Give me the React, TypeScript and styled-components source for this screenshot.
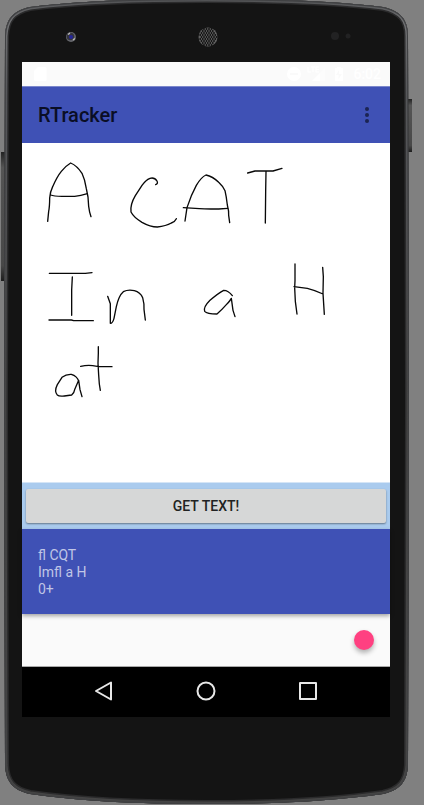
import React from "react";
import styled, { createGlobalStyle } from "styled-components";

const GlobalStyle = createGlobalStyle`
  *, *::before, *::after { box-sizing: border-box; }
  body {
    margin: 0;
    background: #808080;
    font-family: Roboto, "Noto Sans", sans-serif;
  }
  button { font: inherit; color: inherit; border: 0; padding: 0; background: none; cursor: pointer; }
`;

const Device = styled.div`
  position: relative;
  isolation: isolate;
  display: flex;
  flex-direction: column;
  min-height: 100vh;
  padding: 0 34px 0 22px;
`;

const DeviceBody = styled.svg`
  position: absolute;
  inset: 0;
  width: 100%;
  height: 100%;
  z-index: -1;
`;

const Bezel = styled.div<{ $height: number }>`
  flex: none;
  height: ${(p) => p.$height}px;
`;

const SensorRow = styled(Bezel)`
  display: grid;
  grid-template-columns: 1fr auto 1fr;
  align-items: center;
  padding: 12px 38px 0 42px;
`;

const Sensor = styled.svg<{ $end?: boolean }>`
  display: block;
  justify-self: ${(p) => (p.$end ? "end" : "start")};
`;

const Screen = styled.main`
  flex: 1;
  display: flex;
  flex-direction: column;
  background: #fafafa;
`;

const StatusBar = styled.div`
  display: flex;
  align-items: center;
  justify-content: space-between;
  height: 24px;
  padding: 0 9px 0 11px;
  color: #fff;
`;

const StatusGroup = styled.div`
  display: flex;
  align-items: center;
  gap: 4px;
`;

const Clock = styled.time`
  font-size: 14px;
  font-weight: 500;
  line-height: 24px;
`;

const Toolbar = styled.header`
  display: flex;
  align-items: center;
  justify-content: space-between;
  height: 57px;
  padding: 0 11px 0 16px;
  background: #3f51b5;
  border-top: 1px solid #7b87cb;
`;

const Title = styled.h1`
  margin: 0;
  font-size: 20px;
  font-weight: 500;
  line-height: 24px;
  color: #0a0e25;
`;

const MenuButton = styled.button`
  display: grid;
  place-items: center;
  width: 24px;
  height: 40px;
  color: #1c2452;
`;

const WritingPad = styled.section`
  flex: 1;
  min-height: 339px;
  background: #fff;
`;

const Ink = styled.svg`
  display: block;
  width: 100%;
  height: 339px;
  fill: none;
  stroke: #080808;
  stroke-width: 4;
  stroke-linecap: round;
  stroke-linejoin: round;
`;

const ActionBar = styled.div`
  display: flex;
  height: 47px;
  padding: 6px 4px;
  background: #aacbee;
  border-top: 1px solid #d5e5f6;
`;

const TextButton = styled.button`
  flex: 1;
  height: 34px;
  border-radius: 2px;
  background: #d6d7d7;
  box-shadow: 0 1px 2px rgba(0, 0, 0, 0.42);
  color: #212222;
  font-size: 14px;
  font-weight: 500;
  line-height: 34px;
`;

const Result = styled.output`
  display: block;
  height: 85px;
  padding: 18px 16px;
  background: #3f51b5;
  box-shadow: 0 2px 4px rgba(0, 0, 0, 0.35);
  color: #c0c6e6;
  font-size: 14px;
  line-height: 17px;
  white-space: pre-line;
`;

const Footer = styled.div`
  display: flex;
  align-items: center;
  justify-content: flex-end;
  height: 53px;
  padding: 0 16px;
  border-bottom: 1px solid #a8a8a8;
`;

const FloatingButton = styled.button`
  width: 20px;
  height: 20px;
  border-radius: 50%;
  background: #ff4081;
  box-shadow: 0 3px 5px rgba(0, 0, 0, 0.3);
`;

const NavBar = styled.nav`
  display: flex;
  justify-content: center;
  align-items: flex-start;
  gap: 54px;
  height: 50px;
  background: #000;
`;

const NavButton = styled.button`
  display: grid;
  place-items: center;
  width: 48px;
  height: 48px;
`;

const NavIcon = styled.svg`
  width: 24px;
  height: 24px;
  fill: none;
  stroke: #e8e8e8;
  stroke-width: 2;
  stroke-linejoin: round;
`;

const SHELL =
  "M4 400 L5 36 C6 20 12 11 30 7 C70 2 120 -1 207 -1 C293 -1 343 2 383 7 C401 11 408 20 408 36 L409 400 L408 765 C407 782 400 790 383 794 C333 801 280 804 207 804 C134 804 80 801 30 794 C13 790 6 782 5 765 Z";

const SPEAKER_ROWS = [2, 4, 6, 8, 10, 12, 14, 16, 18];

function Shell() {
  return (
    <DeviceBody viewBox="0 0 424 805" preserveAspectRatio="none" aria-hidden="true">
      <defs>
        <linearGradient id="key" x1="0" x2="0" y1="0" y2="1">
          <stop offset="0" stopColor="#222" />
          <stop offset=".12" stopColor="#555" />
          <stop offset=".88" stopColor="#484848" />
          <stop offset="1" stopColor="#1c1c1c" />
        </linearGradient>
        <linearGradient id="rim" x1="0" x2="0" y1="0" y2="1">
          <stop offset="0" stopColor="#505153" />
          <stop offset=".03" stopColor="#707173" />
          <stop offset=".12" stopColor="#56575a" />
          <stop offset=".5" stopColor="#444" />
          <stop offset="1" stopColor="#444" />
        </linearGradient>
      </defs>
      <rect x="1" y="152" width="5" height="129" fill="url(#key)" />
      <rect x="407" y="99" width="5" height="53" fill="url(#key)" />
      <path d={SHELL} fill="#141414" />
      <clipPath id="shell"><path d={SHELL} /></clipPath>
      <g clipPath="url(#shell)" fill="none">
        <path d={SHELL} stroke="#2b2b2c" strokeWidth="8" />
        <path d={SHELL} stroke="url(#rim)" strokeWidth="5" />
        <path d={SHELL} stroke="#404143" strokeWidth="2" />
      </g>
    </DeviceBody>
  );
}

function Sensors() {
  return (
    <SensorRow $height={62}>
      <Sensor width="14" height="14" viewBox="0 0 14 14" aria-hidden="true">
        <circle cx="7" cy="7" r="5" fill="#65666b" />
        <circle cx="6.5" cy="6.5" r="3.8" fill="#34343c" />
        <circle cx="7" cy="7" r="2" fill="#24269a" />
        <path d="M4 4.5l2-1.3M9 10l1.8-1.5" stroke="#bbb" strokeWidth="1.4" />
      </Sensor>
      <Sensor width="20" height="20" viewBox="0 0 20 20" aria-hidden="true">
        <circle cx="10" cy="10" r="9.5" fill="#626262" />
        <g fill="#101010">
          {SPEAKER_ROWS.flatMap((y, row) =>
            [1, 3.5, 6, 8.5, 11, 13.5, 16, 18.5].map((x) => {
              const cx = x + (row % 2) * 1.25;
              return Math.hypot(cx - 10, y - 10) < 9 ? (
                <circle key={`${x}-${y}`} cx={cx} cy={y} r="0.95" />
              ) : null;
            })
          )}
        </g>
      </Sensor>
      <Sensor $end width="24" height="12" viewBox="0 0 24 12" aria-hidden="true">
        <circle cx="7" cy="5" r="4" fill="#222223" />
        <circle cx="20" cy="5" r="2.5" fill="#222223" />
      </Sensor>
    </SensorRow>
  );
}

function StatusIcons() {
  return (
    <StatusBar>
      <svg width="14" height="16" viewBox="0 0 14 16" aria-label="SD card" fill="#fff">
        <path d="M5 1h7a1.500 1.500 0 0 1 1.500 1.500v11a1.500 1.500 0 0 1-1.500 1.500H2.500A1.500 1.500 0 0 1 1 13.500V5z" />
      </svg>
      <StatusGroup>
        <svg width="64" height="16" viewBox="0 0 64 16" aria-hidden="true" fill="#fff">
          <path fillRule="evenodd" d="M9 1a7 7 0 1 0 0 14A7 7 0 0 0 9 1zM5 7h8v2H5z" />
          <path d="M23 1v5h3M26 1h4M28 1v5M34 1h-3v5h3M31 3.500h3" fill="none" stroke="#fff" strokeWidth="1.200" />
          <path d="M27 15L35 7v8z" />
          <path d="M35 7l5-5v13h-5z" opacity=".4" />
          <path fillRule="evenodd" d="M50 2h2V1h4v1h2v13h-8zM54 4l-3 5h2.500v4L57 8h-3z" />
        </svg>
        <Clock>6:02</Clock>
      </StatusGroup>
    </StatusBar>
  );
}

function Handwriting() {
  return (
    <Ink viewBox="0 0 1104 1017" preserveAspectRatio="xMinYMin meet" role="img" aria-label="A CAT In a H at">
      <path d="M77 235L80 205Q83 190 83 165Q85 145 92 131Q105 101 118 85Q132 68 146 60Q165 68 180 91Q189 110 193 137L198 162L200 190Q202 207 207 221" />
      <path d="M86 156Q95 160 120 160H158Q176 158 196 152" />
      <path d="M401 125Q409 122 405 114Q397 102 384 106Q371 111 360 127L340 158Q324 185 327 207Q335 223 360 238Q385 252 406 252Q432 249 448 240Q459 236 463 227" />
      <path d="M489 234L495 194Q507 156 523 127Q538 102 552 96Q572 100 590 118Q603 130 609 143Q613 160 616 186Q621 205 620 217L623 239" />
      <path d="M484 194L520 196Q540 198 590 198L617 196" />
      <path d="M677 90L699 84H753L780 76M732 86L731 145L730 240" />
      <g transform="translate(0 351)">
        <path d="M82 40H190L210 38M151 51L149 90V166M81 180H148L155 182H214" />
        <path d="M257 109L265 131V190Q272 190 276 175L283 140Q290 107 304 95Q318 88 337 92Q355 97 362 113Q367 131 366 148L370 180" />
        <path d="M170 363Q165 348 148 343Q133 342 120 352L106 374Q96 394 106 405Q111 410 127 408L149 405Q157 398 159 386L170 361L174 389L180 410" />
        <path d="M229 260V280L228 310L230 345L232 372L235 391M176 319Q195 315 212 317L230 320H270" />
      </g>
      <g transform="translate(474 321)">
        <path d="M157 137Q145 121 131 121Q114 130 90 151Q69 172 74 184Q81 192 111 192Q125 180 139 164Q151 151 154 145L159 181L165 200" />
        <path d="M345 42V92L344 113L346 154L351 192M342 110L382 115Q403 120 429 132M428 52L430 80L429 130L433 193" />
      </g>
    </Ink>
  );
}

export default function App() {
  return (
    <>
      <GlobalStyle />
      <Device>
        <Shell />
        <Sensors />
        <Screen>
          <StatusIcons />
          <Toolbar>
            <Title>RTracker</Title>
            <MenuButton aria-label="More options">
              <svg width="6" height="18" viewBox="0 0 6 18" fill="currentColor">
                <circle cx="3" cy="3" r="2" />
                <circle cx="3" cy="9" r="2" />
                <circle cx="3" cy="15" r="2" />
              </svg>
            </MenuButton>
          </Toolbar>
          <WritingPad>
            <Handwriting />
          </WritingPad>
          <ActionBar>
            <TextButton>GET TEXT!</TextButton>
          </ActionBar>
          <Result>{"fl CQT\nImfl a H\n0+"}</Result>
          <Footer>
            <FloatingButton aria-label="Clear drawing" />
          </Footer>
          <NavBar aria-label="System navigation">
            <NavButton aria-label="Back">
              <NavIcon viewBox="0 0 24 24"><path d="M19 3.500v17L4 12z" /></NavIcon>
            </NavButton>
            <NavButton aria-label="Home">
              <NavIcon viewBox="0 0 24 24"><circle cx="12" cy="12" r="8.500" /></NavIcon>
            </NavButton>
            <NavButton aria-label="Recent apps">
              <NavIcon viewBox="0 0 24 24"><path d="M4 4h16v16H4z" /></NavIcon>
            </NavButton>
          </NavBar>
        </Screen>
        <Bezel $height={88} />
      </Device>
    </>
  );
}
